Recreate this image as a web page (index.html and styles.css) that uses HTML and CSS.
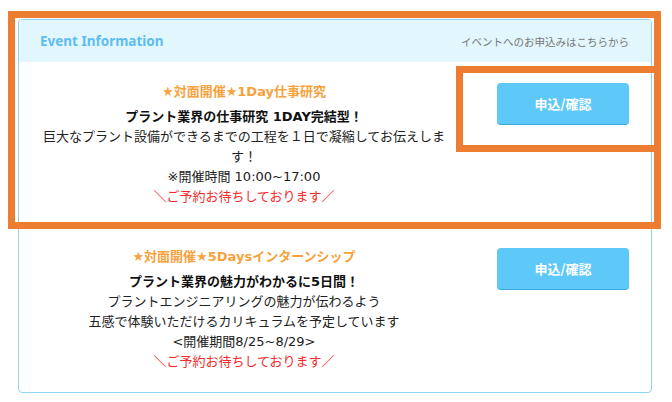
FILE: index.html
```html
<!DOCTYPE html>
<html lang="ja">
<head>
<meta charset="utf-8">
<link rel="stylesheet" href="styles.css">
</head>
<body>
<div class="card">
  <div class="card-head">
    <span class="head-title">Event Information</span>
    <span class="head-note">イベントへのお申込みはこちらから</span>
  </div>
  <div class="event">
    <div class="event-text">
      <p class="ev-title">★対面開催★1Day仕事研究</p>
      <p class="ev-lead">プラント業界の仕事研究 1DAY完結型！</p>
      <p class="ev-body">巨大なプラント設備ができるまでの工程を１日で凝縮してお伝えします！</p>
      <p class="ev-body">※開催時間 10:00~17:00</p>
      <p class="ev-call">＼ご予約お待ちしております／</p>
    </div>
    <div class="event-btn"><a class="btn">申込/確認</a></div>
  </div>
  <div class="event">
    <div class="event-text">
      <p class="ev-title">★対面開催★5Daysインターンシップ</p>
      <p class="ev-lead">プラント業界の魅力がわかるに5日間！</p>
      <p class="ev-body">プラントエンジニアリングの魅力が伝わるよう</p>
      <p class="ev-body">五感で体験いただけるカリキュラムを予定しています</p>
      <p class="ev-body">&lt;開催期間8/25~8/29&gt;</p>
      <p class="ev-call">＼ご予約お待ちしております／</p>
    </div>
    <div class="event-btn"><a class="btn">申込/確認</a></div>
  </div>
</div>
<div class="mark mark-outer"></div>
<div class="mark mark-inner"></div>
</body>
</html>
```

FILE: styles.css
```css
html, body {
  margin: 0;
  padding: 0;
  background: #ffffff;
}
body {
  position: relative;
  width: 672px;
  height: 402px;
  overflow: hidden;
  font-family: "Noto Sans CJK JP", "Noto Sans", sans-serif;
  color: #222222;
}
.card {
  margin: 19px 0 0 18px;
  width: 632px;
  border: 1px solid #8ed4f4;
  border-radius: 4px;
  background: #ffffff;
}
.card-head {
  height: 42px;
  background: #e2f6fd;
  border-radius: 3px 3px 0 0;
  display: flex;
  align-items: center;
  justify-content: space-between;
  padding: 0 22px 0 21px;
}
.head-title {
  font-family: "Noto Sans", sans-serif;
  font-weight: bold;
  font-size: 13.5px;
  color: #5dbdf0;
}
.head-note {
  font-size: 10.5px;
  color: #777777;
}
.event {
  display: flex;
  padding: 20px 22px 20px 0;
}
.event-text {
  flex: 1;
  padding: 0 20px;
  text-align: center;
  font-family: "DejaVu Sans", "Noto Sans CJK JP", sans-serif;
  font-size: 13px;
  line-height: 20px;
}
.event-text p {
  margin: 0;
}
.ev-title {
  color: #f7a23c;
  font-weight: bold;
  margin-bottom: 5px !important;
}
.ev-lead {
  font-weight: bold;
  color: #111111;
}
.ev-call {
  color: #f52b2b;
}
.event-btn {
  width: 132px;
  margin-left: 28px;
  padding-top: 1px;
}
.btn {
  display: flex;
  align-items: center;
  justify-content: center;
  height: 41px;
  background: #5ec8f8;
  border-bottom: 1px solid #3ea8dc;
  border-radius: 4px;
  color: #ffffff;
  font-weight: bold;
  font-size: 13px;
}
.mark {
  position: absolute;
  border: 7px solid #ed7d31;
  box-sizing: border-box;
}
.mark-outer {
  left: 8px;
  top: 11px;
  width: 653px;
  height: 218px;
}
.mark-inner {
  left: 456px;
  top: 66px;
  width: 205px;
  height: 86px;
}
```
